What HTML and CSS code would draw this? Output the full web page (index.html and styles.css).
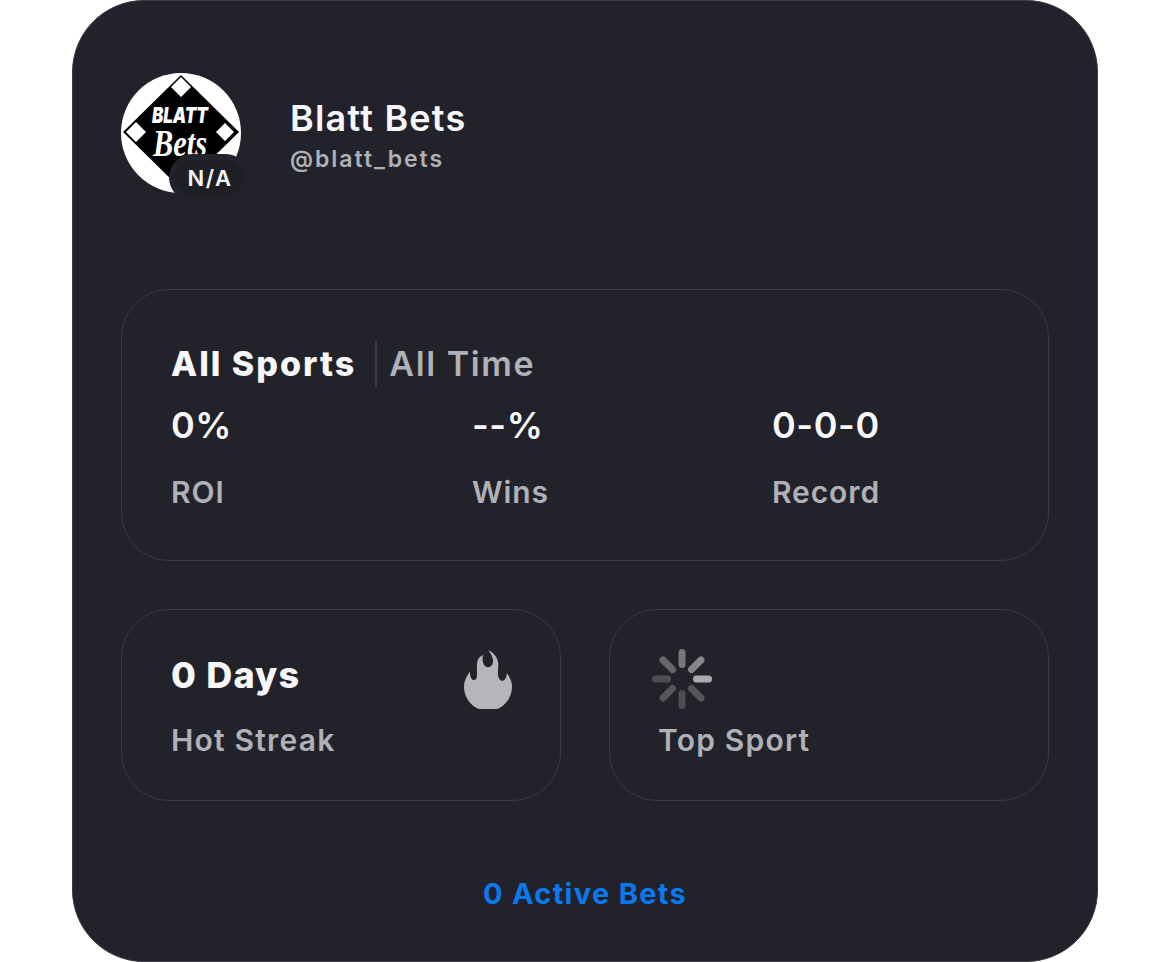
FILE: index.html
```html
<!DOCTYPE html>
<html lang="en">
<head>
<meta charset="utf-8">
<title>Blatt Bets</title>
<link rel="stylesheet" href="styles.css">
</head>
<body>
<main class="card">
  <header class="profile">
    <div class="avatar">
      <svg class="logo" viewBox="0 0 120 120" width="120" height="120">
        <circle cx="60" cy="60" r="60" fill="#fff"/>
        <path d="M60 2 118 59 60 116 2 59Z" fill="#000"/>
        <path d="M60 4 70 14 60 24 50 14Z M15 49 25 59 15 69 5 59Z M104 50 113 59 104 68 95 59Z" fill="#fff"/>
        <text class="logo-top" x="59" y="50" text-anchor="middle" textLength="56" lengthAdjust="spacingAndGlyphs">BLATT</text>
        <text class="logo-script" x="59" y="83" text-anchor="middle" textLength="54" lengthAdjust="spacingAndGlyphs">Bets</text>
      </svg>
      <div class="badge"><span class="badge-inner">N/A</span></div>
    </div>
    <div class="names">
      <div class="name">Blatt Bets</div>
      <div class="handle">@blatt_bets</div>
    </div>
  </header>

  <section class="panel stats">
    <div class="tabs">
      <span class="tab-main">All Sports</span>
      <span class="tab-sep"></span>
      <span class="tab-alt">All Time</span>
    </div>
    <div class="stat-grid">
      <div class="stat"><div class="stat-value">0%</div><div class="label">ROI</div></div>
      <div class="stat"><div class="stat-value">--%</div><div class="label">Wins</div></div>
      <div class="stat"><div class="stat-value">0-0-0</div><div class="label">Record</div></div>
    </div>
  </section>

  <div class="duo">
    <section class="panel mini streak">
      <div>
        <div class="days">0 Days</div>
        <div class="label mini-label">Hot Streak</div>
      </div>
      <svg class="flame" viewBox="0 0 48 59" width="48" height="59">
        <path fill="#b5b6ba" d="M24.300 0C30 3 34.300 8 34.300 14C34.300 19 33.500 23 34.300 26.500C35 29.500 37 31.500 39.500 30.500C41.500 29.700 42.700 27 42.700 23.300C46 27 48 31.500 48 36.700A24 24 0 0 1 33 59H15A24 24 0 0 1 0 36.700C0 31 2.500 26 6 21.700C6 25.500 7 29.500 9.300 30C11.500 30.400 13 28.500 13 25C13 20 12.500 15 13.500 11C14.300 8 16.500 6 19.300 5C18 8.500 18.500 12 20 14.800C21.300 17 24 18 26.500 16.500C29.300 14.800 29.500 11 28.500 8C27.700 5 26 2.500 24.300 0Z"/>
      </svg>
    </section>
    <section class="panel mini sport">
      <svg class="spinner" viewBox="0 0 60 60" width="60" height="60">
        <g stroke-width="7" stroke-linecap="round">
          <line x1="30" y1="3.500" x2="30" y2="15.500" stroke="#76777c"/>
          <line x1="49" y1="11" x2="39.500" y2="20.500" stroke="#85868b"/>
          <line x1="56.500" y1="30" x2="44.500" y2="30" stroke="#a9aaaf"/>
          <line x1="49" y1="49" x2="39.500" y2="39.500" stroke="#55565c"/>
          <line x1="30" y1="56.500" x2="30" y2="44.500" stroke="#4d4e54"/>
          <line x1="11" y1="49" x2="20.500" y2="39.500" stroke="#55565c"/>
          <line x1="3.500" y1="30" x2="15.500" y2="30" stroke="#4d4e54"/>
          <line x1="11" y1="11" x2="20.500" y2="20.500" stroke="#66676c"/>
        </g>
      </svg>
      <div class="label mini-label">Top Sport</div>
    </section>
  </div>

  <footer class="active">0 Active Bets</footer>
</main>
</body>
</html>
```
FILE: styles.css
```css
* { box-sizing: border-box; }
html, body { margin: 0; height: 100%; background: #fff; }
body { font-family: Inter, "Liberation Sans", sans-serif; overflow: hidden; }

.card {
  width: 1026px;
  height: 962px;
  margin: 0 auto;
  padding: 72px 48px 0;
  background: #22232a;
  border: 1px solid #3a3b42;
  border-radius: 72px;
  display: flex;
  flex-direction: column;
}

.profile { display: flex; align-items: flex-start; height: 120px; }
.avatar { position: relative; width: 120px; height: 120px; flex: none; }
.logo { display: block; }
.logo-top { font: italic 900 22px Inter, sans-serif; fill: #fff; }
.logo-script { font: italic 700 38px "Liberation Serif", serif; fill: #fff; }

.badge {
  position: absolute;
  left: 48px;
  top: 81px;
  width: 80px;
  height: 47px;
  padding: 6px;
  border-radius: 24px;
  background: #22232a;
}
.badge-inner {
  display: flex;
  align-items: center;
  justify-content: center;
  height: 35px;
  padding-left: 2px;
  border-radius: 18px;
  background: #1e1f25;
  color: #f5f5f7;
  font-size: 22px;
  font-weight: 600;
  letter-spacing: 1.5px;
}

.names { margin-left: 49px; padding-top: 25px; }
.name { color: #f7f7fa; font-size: 36px; line-height: 41px; font-weight: 600; letter-spacing: 1.2px; }
.handle { color: #b0b1b6; font-size: 23px; line-height: 27px; margin-top: 7px; font-weight: 600; letter-spacing: 2px; }

.panel { background: #22232a; border: 1px solid #3a3b42; border-radius: 48px; }

.stats { margin-top: 96px; height: 272px; padding: 49px 49px 0; }
.tabs { display: flex; align-items: center; height: 48px; font-size: 34px; }
.tab-main { color: #f7f7fa; font-weight: 800; letter-spacing: 2px; }
.tab-sep { width: 2px; height: 47px; background: #3a3b42; margin: 0 12px 0 19px; }
.tab-alt { color: #b0b1b6; font-weight: 600; letter-spacing: 1.6px; }

.stat-grid { display: grid; grid-template-columns: 301px 300px 1fr; margin-top: 16px; }
.stat-value { color: #f7f7fa; font-size: 36px; line-height: 44px; font-weight: 600; letter-spacing: .6px; }
.label { color: #b0b1b6; font-size: 30px; line-height: 35px; font-weight: 600; letter-spacing: .9px; margin-top: 28px; }

.duo { display: grid; grid-template-columns: 1fr 1fr; gap: 48px; margin-top: 48px; }
.mini { height: 192px; }
.streak { display: flex; justify-content: space-between; padding: 43px 48px 0 49px; }
.days { color: #f7f7fa; font-size: 36px; line-height: 44px; font-weight: 800; letter-spacing: 1.2px; }
.mini-label { margin-top: 26px; letter-spacing: 1.2px; }
.flame { display: block; margin-top: -3px; }
.sport { padding: 39px 0 0 42px; }
.spinner { display: block; }
.sport .mini-label { margin: 14px 0 0 6px; }

.active {
  margin-top: 75px;
  text-align: center;
  color: #0a78ee;
  font-size: 29px;
  line-height: 35px;
  font-weight: 700;
  letter-spacing: 1.3px;
}
```
